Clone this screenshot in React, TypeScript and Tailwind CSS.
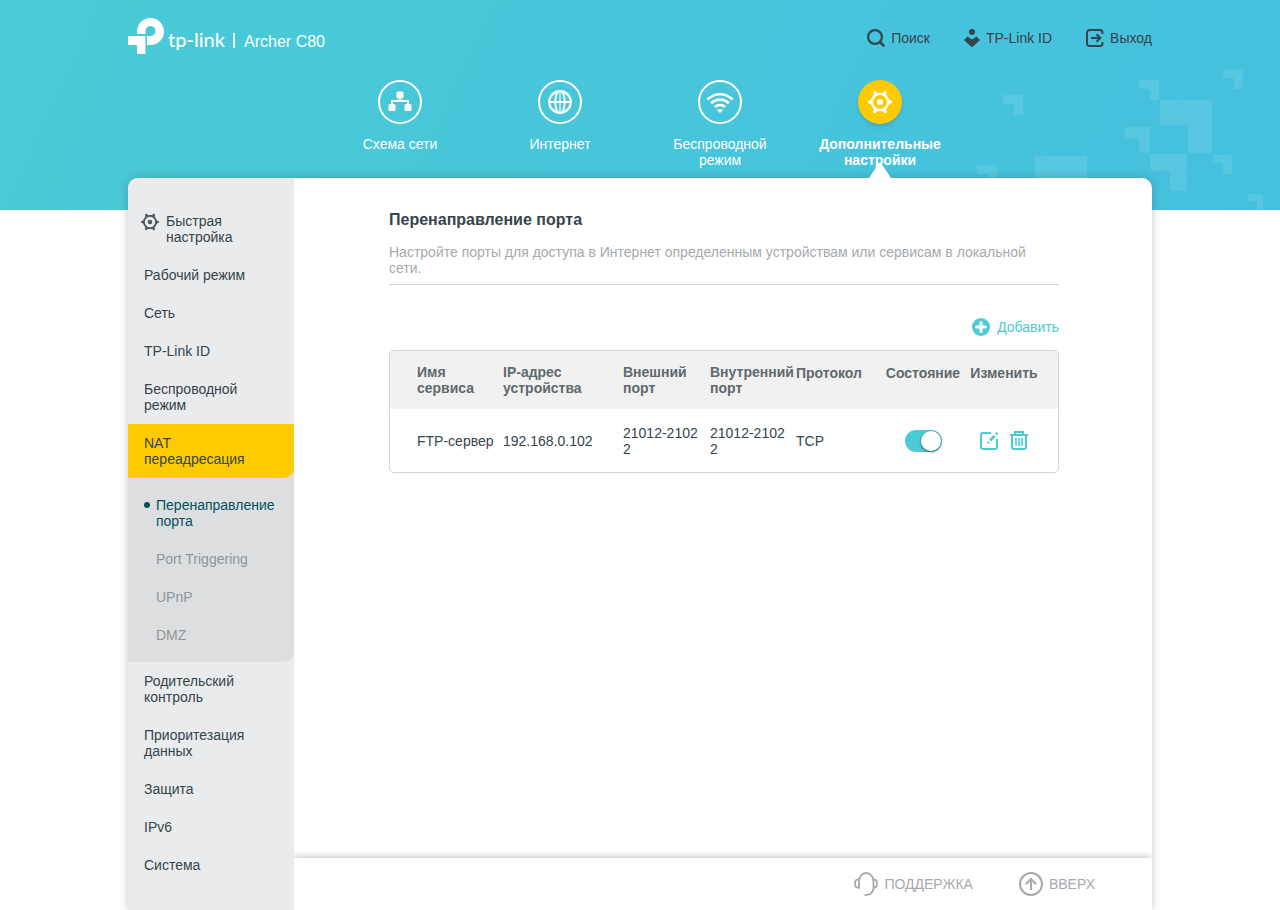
import { ReactNode, useState } from "react";

const sections = [
  { label: "Схема сети", icon: <MapIcon /> },
  { label: "Интернет", icon: <GlobeIcon /> },
  { label: "Беспроводной режим", icon: <WifiIcon /> },
  { label: "Дополнительные настройки", icon: <GearIcon className="size-6" />, active: true }
];

const menuTop = ["Рабочий режим", "Сеть", "TP-Link ID", "Беспроводной режим"];
const menuBottom = ["Родительский контроль", "Приоритезация данных", "Защита", "IPv6", "Система"];
const natPages = ["Перенаправление порта", "Port Triggering", "UPnP", "DMZ"];

const rules = [
  { name: "FTP-сервер", ip: "192.168.0.102", external: "21012-21022", internal: "21012-21022", protocol: "TCP" }
];

function LogoIcon() {
  return (
    <svg className="h-9 w-9" viewBox="0 0 36 36" fill="#fff" aria-hidden="true">
      <path d="M9 16v-2.500A13.500 13.500 0 0 1 22.500 0a13.500 13.500 0 0 1 0 27H19v-9h3.500a5 5 0 1 0-5-5v3Z" />
      <path d="M1 18h16.400v17a1 1 0 0 1-1 1H10a1 1 0 0 1-1-1v-8H1a1 1 0 0 1-1-1v-7a1 1 0 0 1 1-1Z" />
    </svg>
  );
}

function SearchIcon() {
  return (
    <svg className="size-[18px]" viewBox="0 0 18 18" fill="none" stroke="currentColor" strokeWidth="2.200" aria-hidden="true">
      <circle cx="8" cy="8" r="6.900" />
      <path d="m13 13 4.300 4.300" strokeWidth="2.600" />
    </svg>
  );
}

function CloudIdIcon() {
  return (
    <svg className="h-[18px] w-4" viewBox="0 0 16 18" fill="currentColor" aria-hidden="true">
      <circle cx="8" cy="3" r="3" />
      <path d="M3.500 7.500 8 10.500l4.500-3L16 11l-8 7.500L0 11Z" />
    </svg>
  );
}

function LogoutIcon() {
  return (
    <svg className="size-[18px]" viewBox="0 0 18 18" fill="none" stroke="currentColor" strokeWidth="2" aria-hidden="true">
      <path d="M16.500 5V3.500A2.500 2.500 0 0 0 14 1H3.500A2.500 2.500 0 0 0 1 3.500v11A2.500 2.500 0 0 0 3.500 17H14a2.500 2.500 0 0 0 2.500-2.500V13" />
      <path d="M5 9h9M10.500 5.300 14.300 9l-3.800 3.700" />
    </svg>
  );
}

function MapIcon() {
  return (
    <svg className="size-6" viewBox="0 0 24 24" fill="#fff" aria-hidden="true">
      <rect x="8.500" y="1.500" width="7" height="7" rx="1.500" />
      <rect x="0.500" y="14" width="7" height="7" rx="1.500" />
      <rect x="16.500" y="14" width="7" height="7" rx="1.500" />
      <path d="M12 8v3M4 15v-4h16v4" fill="none" stroke="#fff" strokeWidth="2" />
    </svg>
  );
}

function GlobeIcon() {
  return (
    <svg className="size-6" viewBox="0 0 24 24" fill="none" stroke="#fff" strokeWidth="2.200" aria-hidden="true">
      <circle cx="12" cy="12" r="10.800" />
      <path d="M1 12h22M9.500 1.500C6.700 8 6.700 16 9.500 22.500M14.500 1.500c2.800 6.500 2.800 14.500 0 21" strokeWidth="1.900" />
      <path d="M12 1v22" strokeWidth="1.200" />
    </svg>
  );
}

function WifiIcon() {
  return (
    <svg className="h-6 w-7" viewBox="0 0 28 24" fill="none" stroke="#fff" strokeWidth="2.600" aria-hidden="true">
      <path d="M1.500 9.500c7-7 18-7 25 0M5.200 13.300c5-4.900 12.600-4.900 17.600 0M8.900 17c2.900-2.700 7.300-2.700 10.200 0" />
      <path d="M11 20.200q3-2.200 6 0L14 23Z" fill="#fff" stroke="none" />
    </svg>
  );
}

function GearIcon({ className }: { className: string }) {
  return (
    <svg className={className} viewBox="0 0 24 24" fill="currentColor" aria-hidden="true">
      <path d="M1.500 12 6.800 2.800h10.400L22.500 12l-5.300 9.200H6.800Z" />
      <circle cx="1.800" cy="12" r="1.700" />
      <circle cx="22.200" cy="12" r="1.700" />
      <circle cx="7" cy="2.600" r="1.700" />
      <circle cx="17" cy="2.600" r="1.700" />
      <circle cx="7" cy="21.400" r="1.700" />
      <circle cx="17" cy="21.400" r="1.700" />
      <circle cx="12" cy="12" r="5" fill="none" className="stroke-(--gear-hole)" strokeWidth="3.800" />
    </svg>
  );
}

function HeadsetIcon() {
  return (
    <svg className="size-6" viewBox="0 0 24 24" fill="none" stroke="currentColor" strokeWidth="1.800" aria-hidden="true">
      <path d="M5 16.500V9.500C5 4.500 8 1 12.200 1s7.300 3.500 7.300 8.500v6c0 5-3.500 7.600-9 7.600" />
      <path d="M5 7.700H3.500C2 7.700 1 8.900 1 11.500s1 4 2.500 4H5M19.500 7.700h1c1.500 0 2.500 1.200 2.500 3.800s-1 4-2.500 4h-1" />
    </svg>
  );
}

function TopIcon() {
  return (
    <svg className="size-6" viewBox="0 0 24 24" fill="none" stroke="currentColor" strokeWidth="2" aria-hidden="true">
      <circle cx="12" cy="12" r="11" />
      <path d="M12 18V7.500M6.800 12.200 12 7l5.200 5.200" />
    </svg>
  );
}

function AddIcon() {
  return (
    <svg className="size-[18px]" viewBox="0 0 18 18" aria-hidden="true">
      <circle cx="9" cy="9" r="9" fill="currentColor" />
      <path d="M9 4.500v9M4.500 9h9" stroke="#fff" strokeWidth="3" strokeLinecap="round" />
    </svg>
  );
}

function EditIcon() {
  return (
    <svg className="size-5" viewBox="0 0 20 20" fill="none" stroke="currentColor" strokeWidth="2" aria-hidden="true">
      <path d="M12 2H4a2 2 0 0 0-2 2v12a2 2 0 0 0 2 2h12a2 2 0 0 0 2-2V8" />
      <path d="m11 9.500 4.700-4.700M17 3.500 18.500 2" strokeWidth="2.800" />
      <path d="m8.600 12 1.200-1.200" strokeWidth="2.600" />
    </svg>
  );
}

function TrashIcon() {
  return (
    <svg className="size-5" viewBox="0 0 20 20" fill="none" stroke="currentColor" strokeWidth="2" aria-hidden="true">
      <path d="M1 4h18M6 4V1h8v3M3 4v12a2 2 0 0 0 2 2h10a2 2 0 0 0 2-2V4" />
      <path d="M7 7v8M10 7v8M13 7v8" strokeWidth="1.600" />
    </svg>
  );
}

// Corner pieces scattered over the right end of the header
function HeaderPattern() {
  return (
    <svg className="pointer-events-none absolute top-[50px] right-0 h-40 w-80" viewBox="0 0 320 160" fill="#fff" fillOpacity="0.1" aria-hidden="true">
      <path d="M43 45h20v20h-8q-1 0-1-1V54H44q-1 0-1-1Z" />
      <path d="M179 30h20v20h-7q-2 0-2-2v-9h-9q-2 0-2-2Z" />
      <path d="M263 19h20v20h-8q-1 0-1-1V28h-9q-2 0-2-2Z" />
      <path d="M200 50h52v53h-20q-4 0-4-4V75h-24q-4 0-4-4Z" />
      <path d="M165 77h25v26h-8q-3 0-3-3V89h-11q-3 0-3-3Z" />
      <path d="M190 104h37v37h-14q-3 0-3-3v-17h-17q-3 0-3-3Z" />
      <path d="M253 105h19v19h-8q-1 0-1-1v-10h-8q-2 0-2-2Z" />
      <path d="M288 144h15v15h-5q-1 0-1-1v-7h-8q-1 0-1-1Z" />
      <path d="M75 106h52v54H75Z" />
      <path d="M17 115h20v20h-9v-11h-9q-2 0-2-2Z" />
    </svg>
  );
}

function TopLink({ icon, children }: { icon: ReactNode; children: ReactNode }) {
  return (
    <a href="#" className="flex items-center gap-[6px]">
      {icon}
      {children}
    </a>
  );
}

function MenuLink({ children }: { children: ReactNode }) {
  return (
    <a href="#" className="block px-4 py-[11px]">
      {children}
    </a>
  );
}

export default function App() {
  const [enabled, setEnabled] = useState(true);

  return (
    <div className="relative flex min-h-screen flex-col bg-white bg-[linear-gradient(115deg,#4acbd6,#45c0df)] bg-[length:100%_210px] bg-no-repeat font-['Liberation_Sans',Arial,sans-serif] text-sm leading-4 text-[#36444b]">
      <HeaderPattern />

      <header className="relative z-10 mx-auto w-4/5 pt-[18px] pb-[10px]">
        <div className="flex items-start justify-between">
          <div className="flex h-9 items-end text-white">
            <a href="#" className="flex items-end gap-1">
              <LogoIcon />
              <span className="mb-[3px] font-['Lato',sans-serif] text-xl leading-6 font-medium">tp-link</span>
            </a>
            <span className="mb-[6px] ml-2 h-[15px] w-[2px] bg-white/90" />
            <span className="mb-[3px] ml-[9px] text-base leading-[18px]">Archer C80</span>
          </div>
          <div className="flex gap-[34px] pt-[11px]">
            <TopLink icon={<SearchIcon />}>Поиск</TopLink>
            <TopLink icon={<CloudIdIcon />}>TP-Link ID</TopLink>
            <TopLink icon={<LogoutIcon />}>Выход</TopLink>
          </div>
        </div>

        <nav className="mt-[26px] flex justify-center text-center text-white">
          {sections.map((section) => (
            <a
              key={section.label}
              href="#"
              aria-current={section.active ? "page" : undefined}
              className={
                section.active
                  ? "relative flex w-40 flex-col items-center gap-3 px-4 font-bold [--gear-hole:#ffcb00]"
                  : "flex w-40 flex-col items-center gap-3 px-4"
              }
            >
              <span
                className={
                  section.active
                    ? "flex size-11 items-center justify-center rounded-full bg-[#ffcb00] shadow-md"
                    : "flex size-11 items-center justify-center rounded-full border-2 border-white"
                }
              >
                {section.icon}
              </span>
              <span className="min-h-8">{section.label}</span>
              {section.active ? (
                <svg className="absolute -bottom-[10px] h-4 w-[22px]" viewBox="0 0 22 16" fill="#fff" aria-hidden="true">
                  <path d="M0 16 10 1q1-1 2 0l10 15Z" />
                </svg>
              ) : null}
            </a>
          ))}
        </nav>
      </header>

      <div className="mx-auto flex w-4/5 grow rounded-t-[10px] bg-white shadow-[0_0_10px_rgba(54,68,75,0.3)] [clip-path:inset(-12px_-12px_0)]">
        <aside className="w-[166px] shrink-0 rounded-tl-[10px] bg-[#eaebed] pt-6 pb-[26px]">
          <a href="#" className="flex items-start gap-[7px] py-[11px] pl-[13px] [--gear-hole:#eaebed]">
            <GearIcon className="size-[18px] shrink-0 text-[#4d5a60]" />
            <span>
              Быстрая
              <br />
              настройка
            </span>
          </a>
          {menuTop.map((label) => (
            <MenuLink key={label}>{label}</MenuLink>
          ))}
          <div className="rounded-br-[10px] bg-[#dddee0]">
            <a href="#" className="block rounded-br-[10px] bg-[#ffcb00] px-4 py-[11px]">
              NAT
              <br />
              переадресация
            </a>
            <div className="py-2">
              {natPages.map((label, index) => (
                <a
                  key={label}
                  href="#"
                  className={
                    index === 0
                      ? "flex gap-[6px] py-[11px] pl-4 text-[#00525f]"
                      : "block py-[11px] pl-7 text-[#8f9699]"
                  }
                >
                  {index === 0 ? <span className="mt-[5px] size-[6px] shrink-0 rounded-full bg-[#00525f]" /> : null}
                  <span>{label}</span>
                </a>
              ))}
            </div>
          </div>
          {menuBottom.map((label) => (
            <MenuLink key={label}>{label}</MenuLink>
          ))}
        </aside>

        <div className="flex min-w-0 grow flex-col overflow-hidden rounded-tr-[10px]">
          <main className="grow pt-[33px] pr-[93px] pl-[95px]">
            <h1 className="text-base leading-[18px] font-bold">Перенаправление порта</h1>
            <p className="mt-[15px] border-b border-[#d4d4d4] pb-2 text-[#a7a9ac]">
              Настройте порты для доступа в Интернет определенным устройствам или сервисам в локальной сети.
            </p>

            <div className="mt-[33px] flex justify-end">
              <button type="button" className="flex items-center gap-[7px] text-[#4acbd6]">
                <AddIcon />
                Добавить
              </button>
            </div>

            <div className="mt-[14px] overflow-hidden rounded-[5px] border border-[#d4d4d4]">
              <table className="w-full table-fixed text-left">
                <colgroup>
                  <col className="w-[109px]" />
                  <col className="w-[120px]" />
                  <col className="w-[87px]" />
                  <col className="w-[86px]" />
                  <col className="w-[88px]" />
                  <col className="w-[86px]" />
                  <col />
                </colgroup>
                <thead className="bg-[#f1f1f1] text-[#5f696e]">
                  <tr className="h-[58px] align-top">
                    <th className="pt-[13px] pr-1 pl-[27px]">Имя сервиса</th>
                    <th className="px-1 pt-[13px]">
                      IP-адрес
                      <br />
                      устройства
                    </th>
                    <th className="px-1 pt-[13px]">Внешний порт</th>
                    <th className="px-1 pt-[13px]">Внутренний порт</th>
                    <th className="px-1 pt-[14px]">Протокол</th>
                    <th className="px-1 pt-[14px] text-center">Состояние</th>
                    <th className="pt-[14px] pr-4 text-center">Изменить</th>
                  </tr>
                </thead>
                <tbody>
                  {rules.map((rule) => (
                    <tr key={rule.name} className="h-[63px]">
                      <td className="pr-1 pl-[27px]">{rule.name}</td>
                      <td className="px-1">{rule.ip}</td>
                      <td className="px-1 break-all">{rule.external}</td>
                      <td className="px-1 break-all">{rule.internal}</td>
                      <td className="px-1">{rule.protocol}</td>
                      <td className="px-1">
                        <input
                          type="checkbox"
                          role="switch"
                          aria-label="Состояние"
                          checked={enabled}
                          onChange={(event) => setEnabled(event.target.checked)}
                          className="mx-auto flex h-[22px] w-[37px] appearance-none rounded-full bg-[#c4c9cb] p-px before:size-5 before:rounded-full before:bg-white before:shadow-[0_1px_3px_rgba(0,0,0,0.5)] checked:justify-end checked:bg-[#4acbd6]"
                        />
                      </td>
                      <td className="pr-4">
                        <div className="flex justify-center gap-[10px] text-[#4acbd6]">
                          <button type="button" aria-label="Изменить">
                            <EditIcon />
                          </button>
                          <button type="button" aria-label="Удалить">
                            <TrashIcon />
                          </button>
                        </div>
                      </td>
                    </tr>
                  ))}
                </tbody>
              </table>
            </div>
          </main>

          <footer className="flex h-[52px] items-center justify-end gap-[46px] bg-white pr-[57px] text-[#a7a9ac] shadow-[0_0_8px_rgba(54,68,75,0.4)]">
            <a href="#" className="flex items-center gap-[6px]">
              <HeadsetIcon />
              ПОДДЕРЖКА
            </a>
            <a href="#" className="flex items-center gap-[6px]">
              <TopIcon />
              ВВЕРХ
            </a>
          </footer>
        </div>
      </div>
    </div>
  );
}
